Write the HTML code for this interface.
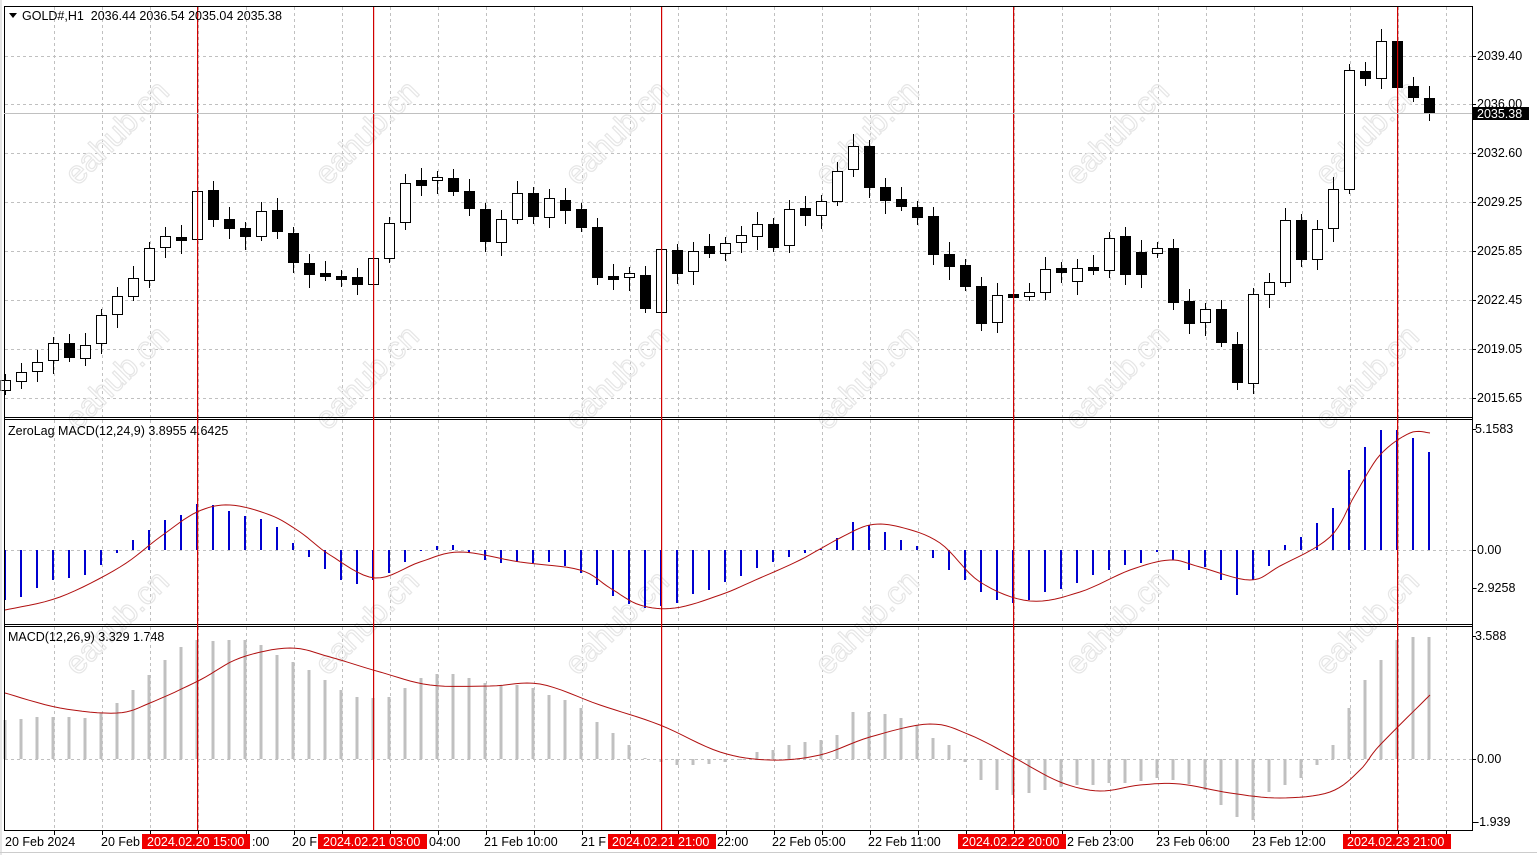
<!DOCTYPE html>
<html><head><meta charset="utf-8">
<style>
html,body{margin:0;padding:0;background:#fff;}
body{width:1537px;height:855px;overflow:hidden;position:relative;font-family:"Liberation Sans",sans-serif;}
svg{position:absolute;left:0;top:0;}
.t{font-family:"Liberation Sans",sans-serif;font-size:12.5px;fill:#000;}
.wm{font-family:"Liberation Sans",sans-serif;font-size:32px;fill:none;stroke:#e6e6e6;stroke-width:1.2;}
</style></head>
<body>
<svg id="s" width="1537" height="855" xmlns="http://www.w3.org/2000/svg">
<rect x="0" y="0" width="1537" height="855" fill="#fff"/>
<g id="grid"></g>
<g id="wm"></g>
<g id="bars"></g>
<g id="cand"></g>
<g id="frame" fill="none" stroke="#000" stroke-width="1">
<line x1="4.5" y1="6" x2="4.5" y2="831"/>
<line x1="4" y1="6.5" x2="1473" y2="6.5"/>
<line x1="1472.5" y1="6" x2="1472.5" y2="831"/>
<line x1="4" y1="417.5" x2="1473" y2="417.5"/>
<line x1="4" y1="419.5" x2="1473" y2="419.5"/>
<line x1="4" y1="624.5" x2="1473" y2="624.5"/>
<line x1="4" y1="626.5" x2="1473" y2="626.5"/>
<line x1="4" y1="830.5" x2="1473" y2="830.5"/>
<line x1="1" y1="0" x2="1" y2="855" stroke="#ccc"/>
<line x1="0" y1="852.5" x2="1537" y2="852.5" stroke="#ccc"/>
</g>
<polyline id="sig1" fill="none" stroke="#b01010" stroke-width="1"/>
<polyline id="sig2" fill="none" stroke="#b01010" stroke-width="1"/>
<g id="red"></g>
<line x1="4" y1="113.5" x2="1472" y2="113.5" stroke="#c0c0c0"/>
<rect x="1473" y="107" width="56" height="13" fill="#000"/>
<text class="t" x="1477" y="118" style="fill:#fff">2035.38</text>
<g id="ticks" stroke="#000"></g>
<path d="M9 13 L17 13 L13 18 Z" fill="#000"/>
<text class="t" x="22" y="20" xml:space="preserve">GOLD#,H1  2036.44 2036.54 2035.04 2035.38</text>
<text class="t" x="8" y="435">ZeroLag MACD(12,24,9) 3.8955 4.6425</text>
<text class="t" x="8" y="641">MACD(12,26,9) 3.329 1.748</text>
<g class="t">
<text x="1477" y="60">2039.40</text>
<text x="1477" y="108">2036.00</text>
<text x="1477" y="157">2032.60</text>
<text x="1477" y="206">2029.25</text>
<text x="1477" y="255">2025.85</text>
<text x="1477" y="304">2022.45</text>
<text x="1477" y="353">2019.05</text>
<text x="1477" y="402">2015.65</text>
<text x="1475" y="433">5.1583</text>
<text x="1477" y="554">0.00</text>
<text x="1473" y="592">-2.9258</text>
<text x="1475" y="640">3.588</text>
<text x="1477" y="763">0.00</text>
<text x="1475" y="826">-1.939</text>
</g>
<g class="t">
<text x="5" y="846">20 Feb 2024</text>
<text x="101" y="846">20 Feb</text>
<text x="252" y="846">:00</text>
<text x="292" y="846">20 F</text>
<text x="429" y="846">04:00</text>
<text x="484" y="846">21 Feb 10:00</text>
<text x="581" y="846">21 F</text>
<text x="717" y="846">22:00</text>
<text x="772" y="846">22 Feb 05:00</text>
<text x="868" y="846">22 Feb 11:00</text>
<text x="1067" y="846">2 Feb 23:00</text>
<text x="1156" y="846">23 Feb 06:00</text>
<text x="1252" y="846">23 Feb 12:00</text>
</g>
<g>
<rect x="142" y="834" width="108" height="15" fill="#f00000"/><text class="t" x="147" y="846" style="fill:#fff">2024.02.20 15:00</text>
<rect x="318" y="834" width="109" height="15" fill="#f00000"/><text class="t" x="323" y="846" style="fill:#fff">2024.02.21 03:00</text>
<rect x="608" y="834" width="108" height="15" fill="#f00000"/><text class="t" x="612" y="846" style="fill:#fff">2024.02.21 21:00</text>
<rect x="958" y="834" width="108" height="15" fill="#f00000"/><text class="t" x="962" y="846" style="fill:#fff">2024.02.22 20:00</text>
<rect x="1343" y="834" width="108" height="15" fill="#f00000"/><text class="t" x="1347" y="846" style="fill:#fff">2024.02.23 21:00</text>
</g>
</svg>
<script>
var NS="http://www.w3.org/2000/svg";
function el(p,t,a){var e=document.createElementNS(NS,t);for(var k in a)e.setAttribute(k,a[k]);document.getElementById(p).appendChild(e);return e;}
for(var x=54;x<1472;x+=48){
 [[7,417],[420,624],[627,830]].forEach(function(r){el('grid','line',{x1:x+.5,y1:r[0],x2:x+.5,y2:r[1],stroke:'#c0c0c0','stroke-dasharray':'3,3'});});
 el('ticks','line',{x1:x+.5,y1:831,x2:x+.5,y2:835});
}
[56,104,153,202,251,300,349,398,550,759].forEach(function(y){el('grid','line',{x1:5,y1:y+.5,x2:1472,y2:y+.5,stroke:'#c0c0c0','stroke-dasharray':'3,3'});el('ticks','line',{x1:1472,y1:y+.5,x2:1476,y2:y+.5});});
[429,588,636,822].forEach(function(y){el('ticks','line',{x1:1472,y1:y+.5,x2:1476,y2:y+.5});});
[130,375,620].forEach(function(y){for(var i=0;i<6;i++){var x=120+i*250;var t=el('wm','text',{x:x-70,y:y+10,transform:'rotate(-45 '+x+' '+y+')','class':'wm'});t.textContent='eahub.cn';}});
[197,373,661,1013,1397].forEach(function(x){el('red','rect',{x:x,y:7,width:1.2,height:823,fill:'#d00000'});});
var C=[[5,'w',380,390],[21,'w',372,381],[37,'w',362,371],[53,'w',343,360],[69,'b',343,357],[85,'w',345,358],[101,'w',315,343],[117,'w',296,314],[133,'w',278,296],[149,'w',248,280],[165,'w',236,247],[181,'b',237,240],[197,'w',191,239],[213,'b',190,219],[229,'b',219,228],[245,'b',228,236],[261,'w',211,236],[277,'b',210,231],[293,'b',233,262],[309,'b',263,274],[325,'b',273,276],[341,'b',276,279],[357,'b',277,284],[373,'w',258,284],[389,'w',223,258],[405,'w',183,222],[421,'b',180,185],[437,'w',177,180],[453,'b',178,191],[469,'b',191,208],[485,'b',209,241],[501,'w',219,242],[517,'w',193,219],[533,'b',193,216],[549,'w',198,217],[565,'b',200,210],[581,'b',209,227],[597,'b',227,277],[613,'b',276,279],[629,'w',273,277],[645,'b',275,308],[661,'w',249,312],[677,'b',250,273],[693,'w',251,271],[709,'b',246,253],[725,'w',243,253],[741,'w',235,242],[757,'w',224,236],[773,'b',224,247],[789,'w',209,245],[805,'b',208,215],[821,'w',201,215],[837,'w',171,201],[853,'w',146,169],[869,'b',146,187],[885,'b',187,200],[901,'b',199,206],[917,'b',207,217],[933,'b',216,254],[949,'b',254,266],[965,'b',265,286],[981,'b',286,323],[997,'w',295,322],[1013,'b',294,297],[1029,'w',292,296],[1045,'w',269,292],[1061,'b',268,272],[1077,'w',268,281],[1093,'b',267,270],[1109,'w',238,270],[1125,'b',236,274],[1141,'b',252,274],[1157,'w',248,253],[1173,'b',248,302],[1189,'b',301,323],[1205,'w',309,322],[1221,'b',309,342],[1237,'b',344,382],[1253,'w',294,383],[1269,'w',282,294],[1285,'w',220,282],[1301,'b',220,259],[1317,'w',229,259],[1333,'w',189,228],[1349,'w',70,189],[1365,'b',71,78],[1381,'w',41,78],[1397,'b',41,87],[1413,'b',86,97],[1429,'b',98,113]];
C.forEach(function(c,i){var x=c[0],t=c[2],b=c[3];var hi=t-6-(i%3)*3,lo=b+5+(i%4)*3;
 el('cand','line',{x1:x+.5,y1:hi,x2:x+.5,y2:lo,stroke:'#000'});
 var h=Math.max(b-t,1);
 el('cand','rect',{x:x-4.5,y:t+.5,width:10,height:h,fill:c[1]=='w'?'#fff':'#000',stroke:'#000'});
});
var B2=[600,597,588,580,578,575,565,553,540,530,520,515,504,505,511,516,519,527,543,557,569,580,584,580,573,562,550,546,545,553,560,563,562,563,562,566,573,585,596,604,608,606,603,594,590,582,576,568,562,557,553,549,538,522,525,532,540,546,558,570,580,592,600,603,600,592,589,583,575,570,565,563,552,560,570,567,580,595,580,566,545,537,523,508,470,447,430,430,438,452];
B2.forEach(function(v,i){var x=5+i*16;el('bars','rect',{x:x-1,y:Math.min(v,550),width:2,height:Math.abs(v-550)||1,fill:'#0000d0'});});
var B3=[720,719,717,717,717,718,713,703,690,675,660,647,640,641,640,640,645,655,662,670,680,690,697,698,697,688,678,674,674,678,683,685,685,688,695,700,708,722,733,745,758,762,765,765,764,762,759,752,750,745,742,740,735,712,712,714,718,725,738,745,762,780,790,795,793,790,787,785,785,783,783,781,778,780,784,790,805,817,820,792,785,778,765,745,708,680,660,640,637,637];
B3.forEach(function(v,i){var x=5+i*16;el('bars','rect',{x:x-1.5,y:Math.min(v,759),width:3,height:Math.abs(v-759)||1,fill:'#c0c0c0'});});
function smooth(pts){var r=[];for(var i=0;i<pts.length-1;i++){var p0=pts[Math.max(i-1,0)],p1=pts[i],p2=pts[i+1],p3=pts[Math.min(i+2,pts.length-1)];for(var k=0;k<8;k++){var t=k/8,t2=t*t,t3=t2*t;var f=function(a,b,c,d){return 0.5*((2*b)+(-a+c)*t+(2*a-5*b+4*c-d)*t2+(-a+3*b-3*c+d)*t3);};r.push(f(p0[0],p1[0],p2[0],p3[0]).toFixed(1)+','+f(p0[1],p1[1],p2[1],p3[1]).toFixed(1));}}r.push(pts[pts.length-1].join(','));return r.join(' ');}
var s1=[[5,610],[60,597],[120,567],[160,537],[197,512],[230,505],[270,515],[300,532],[330,555],[375,578],[420,562],[460,552],[520,562],[580,570],[610,588],[640,605],[675,608],[720,595],[760,578],[800,560],[840,538],[870,525],[900,527],[940,543],[980,582],[1030,601],[1080,592],[1130,570],[1170,560],[1200,567],[1250,580],[1280,566],[1330,537],[1355,495],[1380,455],[1410,433],[1430,433]];
var s2=[[5,693],[60,708],[117,713],[150,703],[200,680],[240,658],[290,648],[330,657],[380,672],[430,685],[490,686],[540,684],[600,705],[660,725],[720,752],[770,760],[820,755],[870,737],[930,724],[970,735],[1013,757],[1060,782],[1100,791],[1140,785],[1180,784],[1230,793],[1280,798],[1330,792],[1360,770],[1380,745],[1430,695]];
document.getElementById('sig1').setAttribute('points',smooth(s1));
document.getElementById('sig2').setAttribute('points',smooth(s2));
</script>
</body></html>
